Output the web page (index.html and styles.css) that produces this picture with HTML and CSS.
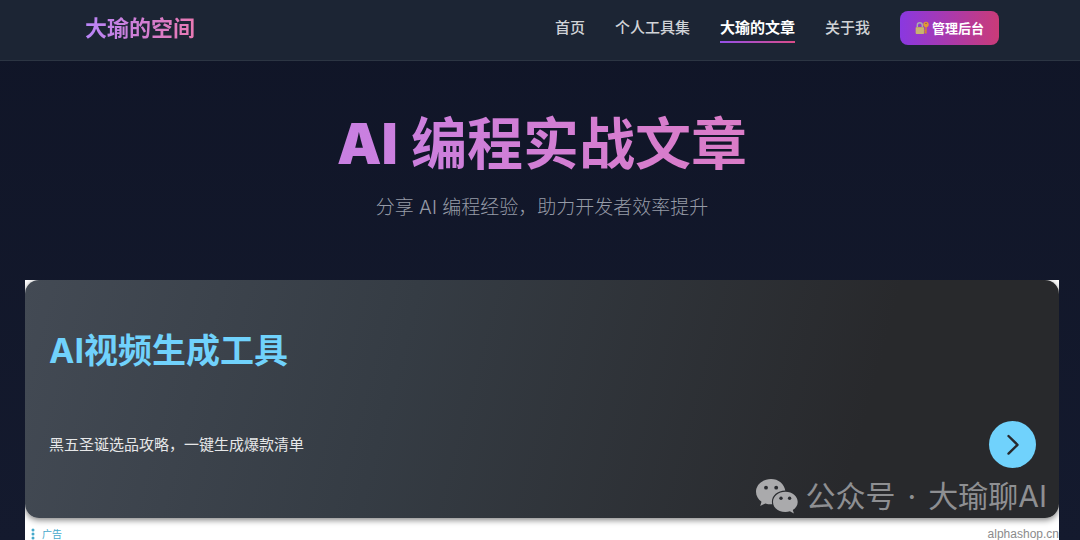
FILE: index.html
```html
<!DOCTYPE html>
<html lang="zh-CN">
<head>
<meta charset="utf-8">
<meta name="viewport" content="width=device-width, initial-scale=1">
<title>大瑜的空间</title>
<link rel="stylesheet" href="styles.css">
</head>
<body>
<header class="site-header">
  <a class="brand" href="#">大瑜的空间</a>
  <nav class="nav">
    <a class="nav-link" href="#">首页</a>
    <a class="nav-link" href="#">个人工具集</a>
    <a class="nav-link active" href="#">大瑜的文章</a>
    <a class="nav-link" href="#">关于我</a>
    <a class="admin" href="#">
      <svg class="lock" viewBox="0 0 14 14" aria-hidden="true">
        <path d="M2.300 7V4.200a2.500 2.500 0 0 1 5 0V7" fill="none" stroke="#a9adb0" stroke-width="1.400"/>
        <rect x=".6" y="6" width="8.600" height="7" rx="1" fill="#bfa960"/>
        <path d="M1 8h7.800M1 10h7.800M1 12h7.800" stroke="#ddd098" stroke-width=".6"/>
        <path d="M11 4v8.500M11 9.500H9.400M11 11.500H9.600" stroke="#d78b28" stroke-width="1.300" fill="none"/>
        <circle cx="11" cy="3.500" r="2.700" fill="#e29a32"/>
        <circle cx="11" cy="2.400" r=".7" fill="#77417a"/>
      </svg>
      <span>管理后台</span>
    </a>
  </nav>
</header>
<main class="page">
  <section class="hero">
    <h1 class="title"><span class="latin">AI</span> 编程实战文章</h1>
    <p class="subtitle">分享 AI 编程经验，助力开发者效率提升</p>
  </section>
  <aside class="ad">
    <div class="ad-card">
      <h2 class="ad-title">AI视频生成工具</h2>
      <div class="ad-row">
        <p class="ad-text">黑五圣诞选品攻略，一键生成爆款清单</p>
        <button class="go" type="button" aria-label="打开">
          <svg viewBox="0 0 47 47" aria-hidden="true"><path d="M19.500 15l9 8.800-9 8.800" fill="none" stroke="#27292d" stroke-width="2.400" stroke-linecap="round" stroke-linejoin="round"/></svg>
        </button>
      </div>
    </div>
    <div class="ad-foot">
      <span class="ad-label">
        <svg class="dots" viewBox="0 0 4 12" aria-hidden="true"><circle cx="2" cy="2" r="1.500"/><circle cx="2" cy="6" r="1.500"/><circle cx="2" cy="10" r="1.500"/></svg>
        广告
      </span>
      <span class="ad-domain">alphashop.cn</span>
    </div>
    <div class="watermark">
      <svg class="wechat" viewBox="0 0 42 35" aria-hidden="true">
        <path fill="#aaaaac" d="M15 0C6.500 0 0 5.600 0 12.800c0 4 2.100 7.500 5.500 9.900L4.200 27l5.200-2.600c1.800.6 3.600.9 5.600.9h1.200C14.500 18 20.500 11.600 29.300 11.600C28.200 4.800 22.500 0 15 0z"/>
        <path fill="#aaaaac" d="M29.400 12.700c-7 0-12.400 4.500-12.400 10.200S22.400 33 29.400 33c1.600 0 3.100-.3 4.500-.7l4 2.200-1.100-3.600c3-1.900 4.900-4.700 4.900-8 0-5.700-5.300-10.200-12.300-10.200z"/>
        <g fill="#2a2c30"><circle cx="10" cy="8.700" r="1.900"/><circle cx="20.200" cy="8.700" r="1.900"/><circle cx="25" cy="19.200" r="1.700"/><circle cx="33.600" cy="19.200" r="1.700"/></g>
      </svg>
      <span class="watermark-text"><span>公众号</span><span>·</span><span>大瑜聊AI</span></span>
    </div>
  </aside>
</main>
</body>
</html>
```
FILE: styles.css
```css
* { box-sizing: border-box; }

body {
  margin: 0;
  min-height: 100vh;
  overflow: hidden;
  color: #fff;
  background: linear-gradient(#101527, #141a2e);
  font-family: Inter, "Noto Sans CJK SC", sans-serif;
}

h1, h2, p { margin: 0; }
a { color: inherit; text-decoration: none; }

.site-header {
  display: flex;
  align-items: center;
  justify-content: space-between;
  padding: 11px 81px 15px 85px;
  background: #1c2534;
  border-bottom: 1px solid #2c3543;
}

.brand {
  font-size: 22px;
  line-height: 34px;
  font-weight: 700;
  color: transparent;
  background: linear-gradient(90deg, #b985f8, #e979b2);
  -webkit-background-clip: text;
  background-clip: text;
}

.nav {
  display: flex;
  align-items: center;
  gap: 30px;
  font-size: 15px;
  line-height: 34px;
  font-weight: 500;
}

.nav-link {
  position: relative;
  color: #d0d3d7;
}

.nav-link.active {
  color: #fff;
  font-weight: 700;
}

.nav-link.active::after {
  content: "";
  position: absolute;
  left: 0;
  right: 0;
  bottom: 2px;
  height: 2px;
  background: linear-gradient(90deg, #9450e8, #da4c89);
}

.admin {
  display: flex;
  align-items: center;
  gap: 3px;
  padding: 0 15px;
  border-radius: 8px;
  font-size: 13px;
  font-weight: 700;
  background: linear-gradient(90deg, #8a38e0, #ca3b78);
}

.lock { width: 14px; height: 14px; }

.page { padding: 0 21px 0 25px; }

.hero {
  padding: 47px 0 57px;
  text-align: center;
}

.title {
  font-size: 56px;
  line-height: 72px;
  font-weight: 700;
  color: transparent;
  background: linear-gradient(90deg, #ba83f6, #e979b3);
  -webkit-background-clip: text;
  background-clip: text;
}

.latin { font-weight: 900; }

.subtitle {
  margin-top: 13px;
  font-size: 19px;
  line-height: 30px;
  font-weight: 300;
  color: #969ba7;
}

.ad {
  position: relative;
  overflow: hidden;
  background: #fff;
}

.ad-card {
  padding: 44px 23px 50px 24px;
  border-radius: 14px;
  background: linear-gradient(105deg, #434a54, #353c44 36%, #28292c 80%);
  box-shadow: 0 2px 6px rgba(0, 0, 0, 0.5);
}

.ad-title {
  font-size: 34px;
  line-height: 54px;
  font-weight: 700;
  color: #70d2fc;
}

.ad-row {
  display: flex;
  align-items: center;
  justify-content: space-between;
  margin-top: 43px;
}

.ad-text {
  font-size: 15px;
  line-height: 24px;
  color: #e6e7e8;
}

.go {
  width: 47px;
  height: 47px;
  padding: 0;
  border: 0;
  border-radius: 50%;
  background: #70d2fc;
}

.go svg { display: block; }

.ad-foot {
  display: flex;
  justify-content: space-between;
  padding: 8px 0 0 6px;
  line-height: 16px;
}

.ad-label {
  display: flex;
  align-items: center;
  gap: 7px;
  font-size: 10px;
  color: #45a9cb;
}

.dots { width: 4px; height: 12px; fill: #45a9cb; }

.ad-domain {
  font-family: "Liberation Sans", sans-serif;
  font-size: 12px;
  color: #8b8b8b;
}

.watermark {
  position: absolute;
  right: 12px;
  bottom: 26px;
  display: flex;
  align-items: center;
  gap: 8px;
  font-size: 30px;
  line-height: 40px;
  font-weight: 400;
  color: #8e8f92;
}

.watermark-text {
  display: flex;
  gap: 12px;
}

.wechat { width: 42px; height: 35px; }
```
